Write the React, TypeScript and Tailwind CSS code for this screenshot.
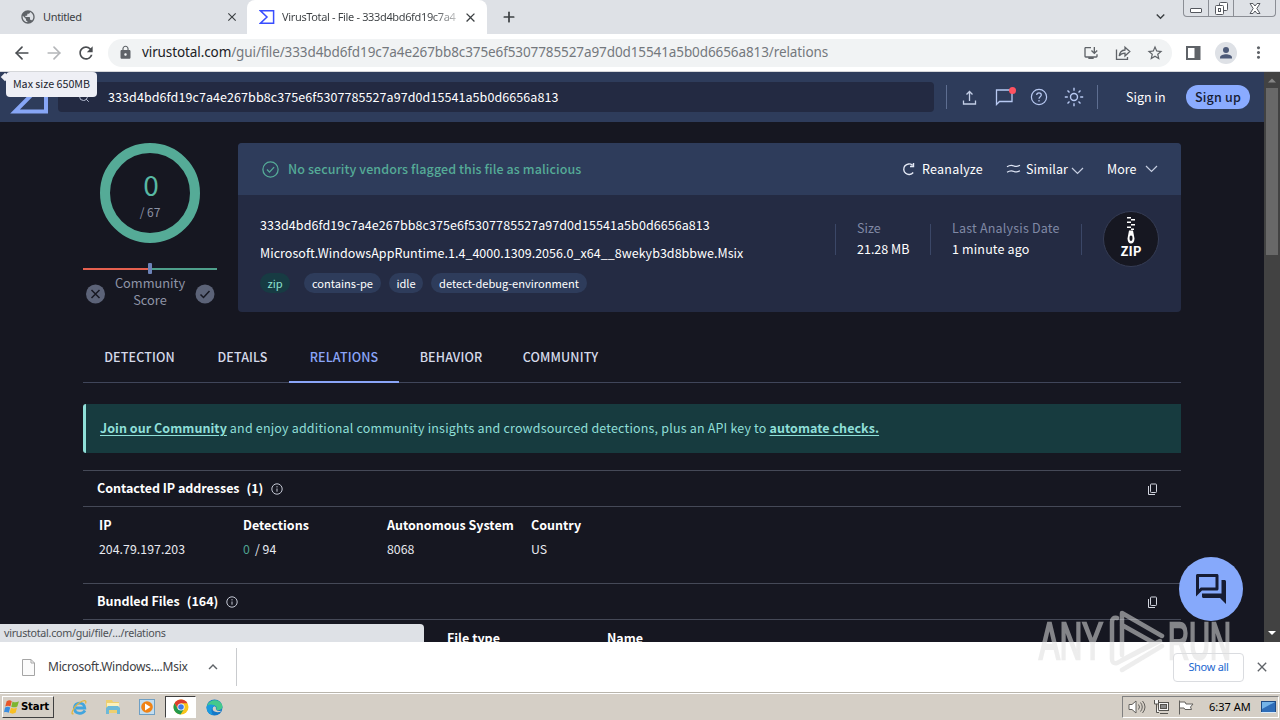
import {
  MdClose,
  MdExpandLess,
  MdExpandMore,
  MdLock,
  MdMoreVert,
  MdOutlineForum,
  MdOutlineInstallDesktop,
  MdPublic,
  MdRefresh,
  MdStarBorder,
} from "react-icons/md";
import { ArrowLeft, ArrowRight, Plus, Search } from "lucide-react";

const HASH = "333d4bd6fd19c7a4e267bb8c375e6f5307785527a97d0d15541a5b0d6656a813";

const tabs = [
  { name: "DETECTION", width: "w-[113px]" },
  { name: "DETAILS", width: "w-[93px]" },
  { name: "RELATIONS", width: "w-[110px]" },
  { name: "BEHAVIOR", width: "w-[104px]" },
  { name: "COMMUNITY", width: "w-[115px]" },
];

const tags = [
  { name: "contains-pe", width: "w-[77px]" },
  { name: "idle", width: "w-[34px]" },
  { name: "detect-debug-environment", width: "w-[156px]" },
];

const ipColumns = [
  { title: "IP", value: "204.79.197.203" },
  { title: "Detections", value: "" },
  { title: "Autonomous System", value: "8068" },
  { title: "Country", value: "US" },
];

function Chevron({ className }: { className: string }) {
  return (
    <svg className={className} width="13" height="8" viewBox="0 0 13 8" fill="none" stroke="#c5cde0" strokeWidth="1.2">
      <path d="m1 1 5.500 5.500L12 1" />
    </svg>
  );
}

function TabStrip() {
  return (
    <div className="flex h-[34px] shrink-0 items-start bg-[#dee1e6] text-[11px] tracking-[-0.35px] text-[#3c4043]">
      <div className="flex h-[34px] w-[247px] items-center pl-[20px]">
        <MdPublic className="size-4 text-[#5f6368]" />
        <span className="ml-[7px] w-[182px]">Untitled</span>
        <MdClose className="size-[14px] text-[#3c4043]" />
      </div>
      <div className="flex h-[34px] w-[240px] items-center rounded-t-lg bg-white pl-[12px]">
        <svg width="16" height="16" viewBox="0 0 16 16" fill="none" stroke="#394eff" strokeWidth="1.500">
          <path d="M1.500 1.800H14.600V14.200H1.500L8 8Z" />
        </svg>
        <span className="ml-[7px] w-[175px] bg-gradient-to-r from-[#3c4043] from-85% to-[#c8c9ca] bg-clip-text whitespace-nowrap text-transparent">
          VirusTotal - File - 333d4bd6fd19c7a4
        </span>
        <MdClose className="ml-[6px] size-[15px] text-[#3c4043]" />
      </div>
      <Plus className="mt-[9px] ml-[14px] size-4 text-[#3c4043]" strokeWidth={2.6} />
      <div className="flex-1" />
      <MdExpandMore className="mt-2 mr-[14px] size-[17px] text-[#3c4043]" />
      <div className="mr-[4px] flex h-[17px] rounded-b border border-t-0 border-[#8b8e95]">
        <div className="flex w-[25px] items-end justify-center border-r border-[#8b8e95] pb-[3px]">
          <div className="h-[5px] w-[12px] rounded-[1px] border border-[#55585f] bg-white" />
        </div>
        <div className="flex w-[25px] items-center justify-center border-r border-[#8b8e95]">
          <svg width="13" height="13" viewBox="0 0 13 13" fill="#fff" stroke="#55585f">
            <rect x="4.5" y="0.5" width="8" height="8" rx="1" />
            <rect x="0.5" y="3.5" width="8" height="9" rx="1" />
            <rect x="3.5" y="6.5" width="2" height="3" />
          </svg>
        </div>
        <div className="flex w-[41px] items-center justify-center">
          <svg width="12" height="11" viewBox="0 0 12 11" fill="#fff" stroke="#55585f">
            <path d="M1 .5h3l2 2.500L8 .5h3L7.800 5.500 11 10.500H8L6 8l-2 2.500H1l3.200-5Z" />
          </svg>
        </div>
      </div>
    </div>
  );
}

function Toolbar() {
  return (
    <div className="flex h-[38px] shrink-0 items-center border-b border-[#d5d7da] bg-white text-[#5f6368]">
      <ArrowLeft className="ml-[12px] size-[20px] text-[#4a4d51]" strokeWidth={2} />
      <ArrowRight className="ml-[12px] size-[20px] text-[#b4b6b9]" strokeWidth={2} />
      <MdRefresh className="ml-[12px] size-[20px] text-[#4a4d51]" />
      <div className="ml-[12px] flex h-[28px] w-[1064px] items-center rounded-full bg-[#f1f3f4] pl-[10px]">
        <MdLock className="size-[15px]" />
        <div className="ml-[9px] w-[941px] text-[13.5px] tracking-[-0.1px] whitespace-nowrap text-[#74787d]">
          <span className="text-[#202124]">virustotal.com</span>/gui/file/{HASH}/relations
        </div>
        <MdOutlineInstallDesktop className="size-4" />
        <svg className="ml-4" width="16" height="16" viewBox="0 0 16 16" fill="none" stroke="#5f6368" strokeWidth="1.300">
          <path d="M1.500 4.500v9.800H12.500V12" />
          <path d="M4.200 11C4.600 7.400 6.500 5.300 10 5V2.200L14.800 6.600 10 11V8.200C7.500 8.200 5.600 9 4.200 11Z" />
        </svg>
        <MdStarBorder className="ml-[15px] size-[18px]" />
      </div>
      <svg className="ml-[14px]" width="15" height="14" viewBox="0 0 15 14">
        <rect x="1" y="1" width="12.500" height="12" fill="none" stroke="#5f6368" strokeWidth="2" />
        <rect x="8.500" y="1" width="5.500" height="12" fill="#5f6368" />
      </svg>
      <div className="ml-[14px] flex size-[22px] items-center justify-center rounded-full bg-[#dee1e6]">
        <svg width="14" height="14" viewBox="0 0 14 14" fill="#4d5a78">
          <circle cx="7" cy="4" r="3" />
          <path d="M1 12.500V11.500C1 9.500 4.500 8.300 7 8.300S13 9.500 13 11.500V12.500Z" />
        </svg>
      </div>
      <MdMoreVert className="ml-[12px] size-[19px]" />
    </div>
  );
}

function SiteHeader() {
  return (
    <div className="flex h-[50px] items-center bg-[#2e3c5b] text-[12.5px] text-white">
      <svg className="ml-[10px]" width="38" height="34" viewBox="0 0 38 34" fill="none" stroke="#87a6f6" strokeWidth="4">
        <path d="M4 2H36V31.500H5L21 15.500Z" />
      </svg>
      <div className="ml-[10px] flex h-[30px] w-[876px] items-center rounded bg-[#232a42] pl-[20px]">
        <Search className="size-[12px] text-[#b6bed3]" />
        <span className="ml-[18px] tracking-[0.08px]">{HASH}</span>
      </div>
      <div className="ml-[12px] h-[24px] w-px bg-[#5e6e91]" />
      <svg className="ml-[14px]" width="17" height="17" viewBox="0 0 17 17" fill="none" stroke="#c3cee6" strokeWidth="1.300">
        <path d="M8.500 12V2.500M5.500 5.500 8.500 2.500 11.500 5.500M2.500 11.500V15h12v-3.500" />
      </svg>
      <div className="relative ml-[17px]">
        <svg width="18" height="18" viewBox="0 0 18 18" fill="none" stroke="#b8c9f2" strokeWidth="1.300">
          <path d="M1.500 16.500V2h15.500v11.500H4.500Z" />
        </svg>
        <div className="absolute -top-[1px] left-[14px] size-[7px] rounded-full bg-[#ff5260]" />
      </div>
      <svg className="ml-[17px]" width="18" height="18" viewBox="0 0 18 18" fill="none" stroke="#b8c9f2" strokeWidth="1.200">
        <circle cx="9" cy="9" r="7.600" />
        <path d="M6.700 7C6.700 4.200 11.300 4.200 11.300 7 11.300 8.700 9 8.700 9 10.700M9 12v1.500" />
      </svg>
      <svg className="ml-[16px]" width="20" height="20" viewBox="0 0 20 20" fill="none" stroke="#b8c9f2" strokeWidth="1.400">
        <circle cx="10" cy="10" r="3.500" />
        <path d="M10 .8v3M10 16.200v3M.8 10h3M16.200 10h3M3.500 3.500l2 2M14.500 14.500l2 2M3.500 16.500l2-2M14.500 5.500l2-2" />
      </svg>
      <div className="ml-[13px] h-[24px] w-px bg-[#5e6e91]" />
      <span className="ml-[28px] w-[60px] tracking-[0.05px]">Sign in</span>
      <div className="flex h-[24px] w-[64px] items-center justify-center rounded-full bg-[#8aabff] font-medium tracking-[0.2px] text-[#161c33]">
        Sign up
      </div>
    </div>
  );
}

function Score() {
  return (
    <div className="flex w-[134px] flex-col items-center">
      <div className="flex size-[100px] flex-col items-center rounded-full border-[10px] border-[#55ab97]">
        <span className="mt-[15px] ml-[2px] text-[28px] leading-[32px] text-[#58b8a3]">0</span>
        <span className="mt-[4px] text-[12px] leading-[16px] text-[#8d92a5]">/ 67</span>
      </div>
      <div className="mt-[20px] flex w-full items-center">
        <div className="h-[2px] flex-1 bg-[#e5604f]" />
        <div className="h-[11px] w-[4px] rounded-[1px] bg-[#6d83b8]" />
        <div className="h-[2px] flex-1 bg-[#4fa08c]" />
      </div>
      <div className="mt-[2px] flex w-full items-center justify-between px-[2px]">
        <svg className="mt-[4px]" width="20" height="20" viewBox="0 0 20 20">
          <circle cx="10.500" cy="10" r="9.500" fill="#5c6378" />
          <path d="m6.500 6 8 8M14.500 6l-8 8" stroke="#161721" strokeWidth="1.500" />
        </svg>
        <div className="-mt-[2px] text-center text-[12.800px] leading-[17px] text-[#8f94a7]">
          Community
          <br />
          Score
        </div>
        <svg className="mt-[4px]" width="20" height="20" viewBox="0 0 20 20" fill="none">
          <circle cx="10" cy="10" r="9.500" fill="#5c6378" />
          <path d="m5.500 10.500 3 3 6-6.500" stroke="#161721" strokeWidth="1.500" />
        </svg>
      </div>
    </div>
  );
}

function FileCard() {
  return (
    <div className="h-[169px] w-[943px] overflow-hidden rounded bg-[#242b43] text-[12.5px] text-white">
      <div className="flex h-[52px] items-center bg-[#2e3c5b] pl-[23px]">
        <svg width="18" height="18" viewBox="0 0 18 18" fill="none" stroke="#55ab97" strokeWidth="1.300">
          <circle cx="9.500" cy="9.500" r="7.600" />
          <path d="m6 9.500 2.500 2.600 4.600-5" />
        </svg>
        <span className="ml-[9px] w-[614px] font-medium tracking-[0.09px] text-[#55ab97]">
          No security vendors flagged this file as malicious
        </span>
        <svg width="13" height="14" viewBox="0 0 13 14" fill="none" stroke="#e4e9f5" strokeWidth="1.400">
          <path d="M11.200 10.500A5.300 5.300 0 1 1 10.500 3.200M11.500 1v3.500H8" />
        </svg>
        <span className="ml-[7px] w-[84px] tracking-[0.25px]">Reanalyze</span>
        <svg width="15" height="10" viewBox="0 0 15 10" fill="none" stroke="#dce3f3" strokeWidth="1.200">
          <path d="M1 2.800C4 .8 7 1.500 8 2S11 2.900 14 1.300M1 8.300C4 6.300 7 7 8 7.500S11 8.400 14 6.800" />
        </svg>
        <span className="ml-[5px] w-[41px] tracking-[0.1px]">Similar</span>
        <Chevron className="mt-[3px] ml-[4px]" />
        <span className="ml-[23px] w-[35px]">More</span>
        <Chevron className="ml-[3px]" />
      </div>
      <div className="flex pl-[22px]">
        <div className="w-[575px] pt-[20px] leading-[20px] whitespace-nowrap">
          <div className="tracking-[0.07px]">{HASH}</div>
          <div className="mt-[8px] tracking-[0.03px]">
            Microsoft.WindowsAppRuntime.1.4_4000.1309.2056.0_x64__8wekyb3d8bbwe.Msix
          </div>
          <div className="mt-[10px] flex gap-[8px] text-[11.100px]">
            <span className="mr-[6px] w-[30px] rounded-full bg-[#173b43] text-center text-[#8ce0cf]">zip</span>
            {tags.map((tag) => (
              <span key={tag.name} className={`rounded-full bg-[#2e3c5b] text-center ${tag.width}`}>
                {tag.name}
              </span>
            ))}
          </div>
        </div>
        <div className="mt-[29px] flex h-[31px] items-center border-l border-[#3b4767] pl-[21px]">
          <div className="-mt-[4px] w-[73px] leading-[21px]">
            <div className="text-[#8089a5]">Size</div>
            <div>21.28 MB</div>
          </div>
        </div>
        <div className="mt-[29px] flex h-[31px] items-center border-x border-[#3b4767] pl-[21px]">
          <div className="-mt-[4px] w-[129px] leading-[21px]">
            <div className="tracking-[0.2px] text-[#8089a5]">Last Analysis Date</div>
            <div className="tracking-[0.15px]">1 minute ago</div>
          </div>
        </div>
        <div className="mt-[16px] ml-[21px] flex size-[56px] flex-col items-center rounded-full border border-[#363d55] bg-[#161721]">
          <svg className="mt-[5px]" width="12" height="27" viewBox="0 0 12 27" fill="#fff">
            <path d="M2 0h4v1.500H2zM6 2h4v1.500H6zM2 4.500h4V6H2zM6 7h4v1.500H6zM2 9.500h4V11H2zM6 11.500h3v1.500H6z" />
            <path
              fillRule="evenodd"
              d="M4 13.500h4l1.500 8C9.500 24.500 8 26.500 6 26.500S2.500 24.500 2.500 21.500ZM6 18.500c-1 0-1.500.8-1.500 2.500S5 24 6 24s1.500-1.300 1.500-3S7 18.500 6 18.500Z"
            />
          </svg>
          <span className="text-[13px] leading-[13px] font-bold">ZIP</span>
        </div>
      </div>
    </div>
  );
}

function SectionTitle({ title, count }: { title: string; count: string }) {
  return (
    <div className="flex h-[37px] items-center border-y border-[#454957] pr-[23px] pl-[14px] text-[12.5px] font-bold tracking-[-0.03px]">
      <span>{title}</span>
      <span className="ml-[7px]">{count}</span>
      <svg className="ml-[8px]" width="12" height="12" viewBox="0 0 12 12" fill="none" stroke="#c4c8d4">
        <circle cx="6" cy="6" r="5.200" />
        <path d="M6 5.500v3.200M6 3.200v1.200" />
      </svg>
      <div className="flex-1" />
      <svg width="11" height="12" viewBox="0 0 11 12" fill="none" stroke="#d2d5df">
        <rect x="3.500" y="1" width="6" height="8.500" rx=".8" />
        <path d="M1.500 3v8.500H8" />
      </svg>
    </div>
  );
}

function Relations() {
  return (
    <>
      <SectionTitle title="Contacted IP addresses" count="(1)" />
      <div className="flex h-[76px] pt-[5px] pl-[16px] text-[12.5px] leading-[25px]">
        {ipColumns.map((col) => (
          <div key={col.title} className="w-[144px] whitespace-nowrap">
            <div className="font-bold">{col.title}</div>
            <div className="text-[12.300px] tracking-[0.05px] text-[#e8eaf0]">
              {col.value || (
                <>
                  <span className="mr-[5px] text-[#4fa391]">0</span>/ 94
                </>
              )}
            </div>
          </div>
        ))}
      </div>
      <SectionTitle title="Bundled Files" count="(164)" />
      <div className="flex pt-[5px] pl-[364px] text-[12.5px] leading-[25px] font-bold">
        <span className="w-[160px]">File type</span>
        <span>Name</span>
      </div>
    </>
  );
}

function Scrollbar() {
  return (
    <div className="flex w-[16px] flex-col items-center bg-[#424242]">
      <svg width="16" height="16" viewBox="0 0 16 16">
        <path d="M4 10.500 8 6.500l4 4Z" fill="#858585" />
      </svg>
      <div className="h-[167px] w-[12px] bg-[#686868]" />
      <div className="flex-1" />
      <svg width="16" height="18" viewBox="0 0 16 18">
        <path d="M4 7h8l-4 4Z" fill="#fff" />
      </svg>
    </div>
  );
}

function Page() {
  return (
    <div className="h-full w-[1264px] overflow-hidden bg-[#161721] font-['Noto_Sans_CJK_SC',sans-serif] text-white">
      <SiteHeader />
      <div className="px-[83px]">
        <div className="flex gap-[21px] pt-[21px]">
          <Score />
          <FileCard />
        </div>
        <div className="mt-[21px] flex h-[50px] w-[1098px] border-b border-[#40465a] text-[12.5px] font-medium tracking-[0.14px] text-[#d5daea]">
          {tabs.map((tab) => (
            <div
              key={tab.name}
              className={`flex h-[50px] items-center justify-center ${tab.width} ${
                tab.name === "RELATIONS" ? "border-b-2 border-[#8aa5f8] text-[#8aa5f8]" : "pb-[2px]"
              }`}
            >
              {tab.name}
            </div>
          ))}
        </div>
        <div className="mt-[21px] mb-[17px] flex h-[49px] w-[1098px] items-center rounded-l-[3px] border-l-[3px] border-[#8fdfd8] bg-[#173b3f] pl-[14px] text-[12.5px] whitespace-pre text-[#8fdfd8]">
          <span className="font-bold tracking-[0.05px] underline underline-offset-2">Join our Community</span>
          <span className="tracking-[0.18px]">
            {" and enjoy additional community insights and crowdsourced detections, plus an API key to "}
          </span>
          <span className="font-bold tracking-[0.05px] underline underline-offset-2">automate checks.</span>
        </div>
        <div className="w-[1098px]">
          <Relations />
        </div>
      </div>
    </div>
  );
}

function DownloadShelf() {
  return (
    <div className="flex h-[51px] shrink-0 items-center border-b border-[#b9b5ac] bg-white text-[#3c4043]">
      <svg className="ml-[22px]" width="13" height="17" viewBox="0 0 13 17" fill="#fbfbfb" stroke="#a5a5a5">
        <path d="M.5.500H9l3.500 3.500v12.500H.5ZM9 .5V4h3.500" />
      </svg>
      <span className="ml-[13px] w-[156px] text-[12px] tracking-[-0.25px]">Microsoft.Windows....Msix</span>
      <MdExpandLess className="size-[18px] text-[#5f6368]" />
      <div className="ml-[14px] h-[38px] w-px bg-[#c9cbce]" />
      <div className="flex-1" />
      <div className="flex h-[29px] w-[71px] items-center justify-center rounded border border-[#dadce0] text-[11px] tracking-[-0.3px] text-[#2468cf]">
        Show all
      </div>
      <MdClose className="mr-[10px] ml-[10px] size-[16px] text-[#5f6368]" />
    </div>
  );
}

function Taskbar() {
  return (
    <div className="flex h-[27px] shrink-0 items-center border-t border-white bg-[#d5cfc6] text-black">
      <div className="ml-[2px] flex h-[22px] w-[52px] items-center border border-t-white border-r-[#404040] border-b-[#404040] border-l-white pl-px font-['DejaVu_Sans_Condensed',sans-serif] text-[11.300px] font-bold tracking-[-0.2px]">
        <svg className="mr-px" width="16" height="16" viewBox="0 0 15 15">
          <path d="M2.500 2C4.500.8 6 1 7.300 2L6 7C4.500 6 3 6 1.200 7Z" fill="#e8562a" />
          <path d="M8 2.300C10 3.500 12 3.300 14 2l-1.500 5C10.500 8 8.800 8 6.800 7.200Z" fill="#7db52f" />
          <path d="M1 8C2.800 7 4.500 7 5.800 8l-1.300 5C3 12 1.500 12 0 12.500Z" fill="#3a8de0" />
          <path d="M6.600 8.200C8.600 9.200 10.400 9 12.200 8l-1.300 5C9 14 7 14 5.200 13Z" fill="#f8bf23" />
        </svg>
        Start
      </div>
      <svg className="ml-[17px]" width="17" height="17" viewBox="0 0 17 17" fill="none">
        <path d="M14 11.500C11 16 3.500 15 3.300 9 3.500 2.500 13.500 2.500 13.800 9H5" stroke="#42a5de" strokeWidth="2.800" />
        <path d="M2.500 14.500C-1 17 2 8 8 4c5-3.500 8-3 6.500.5" stroke="#e3b63f" strokeWidth="1.300" />
      </svg>
      <svg className="ml-[17px]" width="16" height="16" viewBox="0 0 16 16">
        <path d="M1 1h6l1 2h6v11H1Z" fill="#edcf70" />
        <path d="M2 4h12v4H2z" fill="#fbf0bb" />
        <path d="M1 15V9l2-2h10l2 2v6h-3v-4H4v4Z" fill="#6db9d8" />
      </svg>
      <svg className="ml-[18px]" width="16" height="16" viewBox="0 0 16 16">
        <rect x=".5" y=".5" width="15" height="15" fill="#c2ddf0" stroke="#6e9fc4" />
        <circle cx="8" cy="8" r="5.800" fill="#f08316" />
        <path d="M6 4.500 11.500 8 6 11.500Z" fill="#fff" />
      </svg>
      <div className="ml-[10px] flex h-[22px] w-[31px] items-center justify-center border border-t-[#404040] border-r-white border-b-white border-l-[#404040] bg-white">
        <svg width="16" height="16" viewBox="0 0 16 16">
          <circle cx="8" cy="8" r="7.500" fill="#f8c51c" />
          <path d="M1.500 4.250A7.500 7.500 0 0 1 14.500 4.250H8L5 10Z" fill="#dd3e2e" />
          <path d="M1.500 4.250A7.500 7.500 0 0 0 7.500 15.500L11.200 9.800 4.800 9.900Z" fill="#23994d" />
          <circle cx="8" cy="8" r="3.600" fill="#fff" />
          <circle cx="8" cy="8" r="2.800" fill="#3e7be8" />
        </svg>
      </div>
      <svg className="ml-[10px]" width="17" height="17" viewBox="0 0 17 17">
        <circle cx="8.500" cy="8.500" r="8" fill="#1478c8" />
        <path d="M1 7C3 0 14-1 16.500 7c.5 4-4 5-6.500 3.500C12 8 9 4 1 7Z" fill="#45c98c" />
        <path d="M8 7c-3 3-1 7 6 6l1.500-1.500C12 13 9 11 10 9 10 8 9 7 8 7Z" fill="#d5cfc6" />
        <path d="M.8 7C4 4.500 8 5.500 9 7.200 6 7.500 4 11 7 16 2 15 0 11 .8 7Z" fill="#1b9adf" />
      </svg>
      <div className="flex-1" />
      <div className="mr-px flex h-[22px] w-[157px] items-center border border-t-[#808080] border-r-white border-b-white border-l-[#808080] text-[11px]">
        <svg className="ml-[5px]" width="18" height="14" viewBox="0 0 18 14" fill="#fff" stroke="#62605c">
          <path d="M1 4.500h3l4-3.500v12L4 9.500H1Z" />
          <path d="M10.500 4.500q2 2.500 0 5M12.500 2.500q3.500 4.500 0 9M14.500 1q5 6 0 12" fill="none" />
        </svg>
        <svg className="ml-[7px]" width="17" height="16" viewBox="0 0 17 16" fill="#f5f5f5" stroke="#55534f">
          <rect x="5.500" y="3.500" width="10" height="8" />
          <rect x="7.500" y="5.500" width="6" height="4" fill="#8a8a8a" />
          <path d="M7 14.500h8M1.500 1v4h4V1M3.500 5v8.500H6" />
        </svg>
        <svg className="ml-[8px]" width="16" height="15" viewBox="0 0 16 15" fill="#fff" stroke="#62605c">
          <path d="M1.500.5v14M1.500 2H7l1 2h7l-2.500 3 1 2.500H7L6 8H1.500" />
        </svg>
        <span className="ml-[15px] whitespace-nowrap">6:37 AM</span>
        <div className="flex-1" />
        <svg className="mr-[2px]" width="15" height="13" viewBox="0 0 15 13">
          <rect x=".5" y=".5" width="14" height="11" fill="#2f6db8" stroke="#1e4a85" />
          <path d="M1 1h13L1 8Z" fill="#74b3e8" />
          <path d="M0 11.500h15" stroke="#d9e9f7" />
        </svg>
      </div>
    </div>
  );
}

export default function App() {
  return (
    <div className="relative flex h-[720px] w-[1280px] flex-col overflow-hidden bg-white font-['Noto_Sans',sans-serif]">
      <TabStrip />
      <Toolbar />
      <div className="flex h-[570px] shrink-0">
        <Page />
        <Scrollbar />
      </div>
      <DownloadShelf />
      <Taskbar />

      {/* upload tooltip with its arrow */}
      <div className="absolute top-[72px] left-[6px] flex h-[25px] w-[91px] items-center justify-center rounded-sm bg-[#eeeff5] font-['Noto_Sans_CJK_SC',sans-serif] text-[10.700px] text-[#20232d]">
        <div className="absolute top-[2px] -left-[4px] size-[6px] rotate-45 bg-[#eeeff5]" />
        Max size 650MB
      </div>
      <div className="absolute top-[624px] left-0 flex h-[18px] w-[424px] items-center rounded-tr bg-[#dee1e6] pl-[4px] text-[10.700px] tracking-[-0.27px] text-[#4c5055]">
        virustotal.com/gui/file/…/relations
      </div>
      <div className="absolute top-[557px] left-[1179px] flex size-[64px] items-center justify-center rounded-full bg-[#86a9fb]">
        <MdOutlineForum className="size-[36px] text-[#161c33]" />
      </div>
      <svg
        className="absolute top-[605px] left-[1036px] opacity-55"
        width="200"
        height="72"
        viewBox="0 0 200 72"
        fill="#dfdfdf"
        stroke="#dfdfdf"
      >
        <g fontFamily="Liberation Sans" fontSize="51" strokeWidth="2.500">
          <text x="3" y="54" textLength="64" lengthAdjust="spacingAndGlyphs">ANY</text>
          <text x="132" y="54" textLength="63" lengthAdjust="spacingAndGlyphs">RUN</text>
        </g>
        <g fill="none" strokeWidth="4.500" strokeLinejoin="round" strokeLinecap="round">
          <path d="M81 13Q76 12 76 17V54Q76 59 81 58L124 36M86 50V8L126 31M86 20l32 18-32 17M86 65l40-24" />
        </g>
      </svg>
    </div>
  );
}
